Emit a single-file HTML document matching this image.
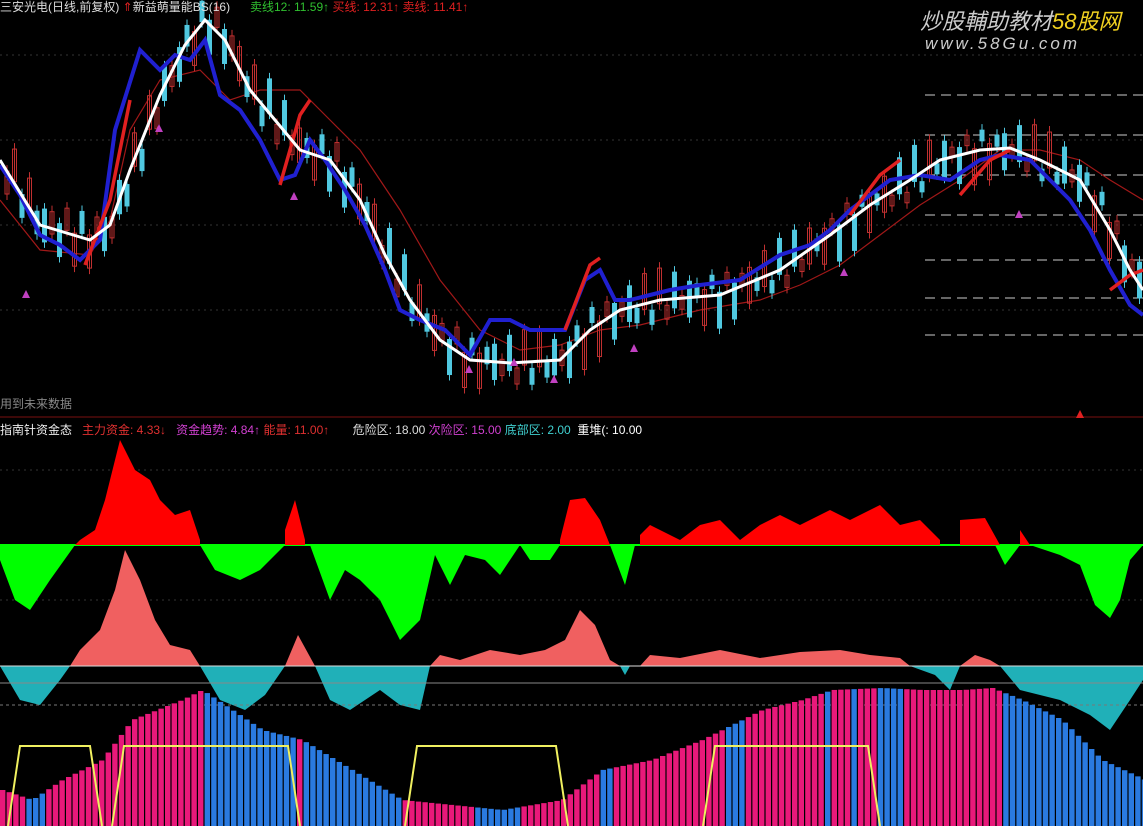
<!DOCTYPE html><html><head><meta charset="utf-8"><style>
body{margin:0;background:#000;width:1143px;height:826px;overflow:hidden;font-family:"Liberation Sans","Noto Sans CJK SC",sans-serif}
svg{position:absolute;left:0;top:0}
.t{position:absolute;font-size:12px;white-space:nowrap}
</style></head><body>
<svg width="1143" height="826" id="s">
<g stroke="#333" stroke-dasharray="2,4" stroke-width="1">
<line x1="0" y1="55" x2="1143" y2="55"/><line x1="0" y1="140" x2="1143" y2="140"/><line x1="0" y1="225" x2="1143" y2="225"/><line x1="0" y1="310" x2="1143" y2="310"/>
<line x1="0" y1="470" x2="1143" y2="470"/><line x1="0" y1="600" x2="1143" y2="600"/>
</g>
<g stroke="#ccc" stroke-dasharray="10,6"><line x1="925" y1="95" x2="1143" y2="95"/><line x1="925" y1="135" x2="1143" y2="135"/><line x1="925" y1="175" x2="1143" y2="175"/><line x1="925" y1="215" x2="1143" y2="215"/><line x1="925" y1="260" x2="1143" y2="260"/><line x1="925" y1="298" x2="1143" y2="298"/><line x1="925" y1="335" x2="1143" y2="335"/></g>
<line x1="0" y1="417" x2="1143" y2="417" stroke="#7a1010"/>
<polyline fill="none" stroke="#a01818" stroke-width="1.2" points="0,200 40,250 90,255 110,220 130,130 160,80 200,70 230,100 260,90 300,90 330,120 360,150 400,210 440,280 480,330 520,350 560,345 600,330 640,325 700,310 760,300 800,285 840,265 880,235 920,205 960,180 1000,150 1040,150 1080,160 1110,180 1143,200"/>
<g id="candles"></g>
<polyline fill="none" stroke="#2020d0" stroke-width="4" points="0,165 20,195 40,235 60,245 80,260 100,240 115,130 140,50 160,70 175,55 190,60 205,40 220,95 240,110 260,140 280,180 295,175 310,140 325,160 345,190 365,225 385,270 400,310 420,320 445,330 470,355 490,320 510,320 530,330 545,330 565,330 585,280 600,270 615,300 630,300 650,295 670,290 700,285 740,280 780,255 810,245 830,230 850,210 870,195 890,180 920,175 950,180 980,160 1000,155 1030,160 1050,180 1070,200 1090,230 1110,270 1130,305 1143,315"/>
<g stroke="#e02020" stroke-width="3.5" fill="none"><polyline points="85,265 110,200 130,100"/><polyline points="280,185 300,115 310,100"/><polyline points="565,330 590,265 600,258"/><polyline points="850,215 880,175 900,160"/><polyline points="960,195 990,160 1010,150"/><polyline points="1110,290 1130,275 1143,270"/></g>
<polyline fill="none" stroke="#fff" stroke-width="3" points="0,160 40,225 90,240 110,225 130,170 160,95 185,45 205,20 225,40 250,90 275,120 300,150 330,160 360,200 385,255 410,300 440,340 470,360 510,363 560,360 590,330 620,310 660,300 720,295 780,270 830,235 870,205 910,180 940,160 980,150 1010,148 1040,160 1080,180 1110,230 1130,270 1143,290"/>
<g fill="#c040c0"><polygon points="22,298 26,290 30,298"/><polygon points="155,132 159,124 163,132"/><polygon points="290,200 294,192 298,200"/><polygon points="465,373 469,365 473,373"/><polygon points="510,366 514,358 518,366"/><polygon points="550,383 554,375 558,383"/><polygon points="630,352 634,344 638,352"/><polygon points="840,276 844,268 848,276"/><polygon points="1015,218 1019,210 1023,218"/><polygon points="1076,418 1080,410 1084,418" fill="#e02020"/></g>
<line x1="0" y1="545" x2="1143" y2="545" stroke="#00ff00" stroke-width="2"/>
<polygon fill="#ff0000" points="75,545 80,540 95,530 105,500 120,440 135,470 150,480 160,500 175,515 190,510 200,540 200,545 285,545 285,530 295,500 305,540 305,545 560,545 560,540 570,500 585,498 600,520 610,545 640,545 640,535 650,525 680,540 700,525 720,520 740,540 760,525 780,515 800,525 830,510 850,520 880,505 900,525 920,520 940,540 940,545 960,545 960,520 985,518 1000,545 1020,545 1020,530 1030,545"/>
<polygon fill="#00ff00" points="0,545 0,560 15,600 30,610 50,580 75,545 200,545 215,570 240,580 260,570 285,545 310,545 330,600 345,570 360,580 380,600 400,640 420,620 435,555 450,585 465,555 485,560 500,575 520,545 530,560 550,560 560,545 610,545 625,585 635,545 995,545 1005,565 1020,545 1030,545 1060,555 1080,565 1095,605 1110,618 1120,600 1130,560 1143,545"/>
<polygon fill="#f06060" points="70,666 80,650 100,630 115,590 125,550 140,580 155,620 170,645 190,650 200,666 285,666 298,635 315,666 430,666 440,655 460,660 490,650 520,655 545,650 565,640 580,610 595,625 610,660 620,666 640,666 650,655 680,658 720,650 760,658 800,652 840,650 870,655 900,658 910,666 960,666 975,655 990,660 1000,666"/>
<polygon fill="#20b0b8" points="0,666 20,700 40,705 60,680 70,666 200,666 220,700 245,710 265,695 285,666 315,666 330,700 350,710 380,690 400,705 420,710 430,666 620,666 625,675 630,666 910,666 935,675 950,690 960,666 1000,666 1020,690 1060,700 1090,715 1110,730 1130,700 1143,680 1143,666"/>
<line x1="0" y1="666" x2="1143" y2="666" stroke="#ddd" stroke-width="1"/>
<line x1="0" y1="683" x2="1143" y2="683" stroke="#888" stroke-width="1"/>
<line x1="0" y1="705" x2="1143" y2="705" stroke="#777" stroke-dasharray="3,3"/>
<g id="bars"></g>
<g stroke="#f0f060" stroke-width="2" fill="none">
<polyline points="8,826 20,746 90,746 102,826"/><polyline points="112,826 124,746 288,746 300,826"/><polyline points="405,826 417,746 556,746 568,826"/><polyline points="703,826 715,746 868,746 880,826"/></g>
</svg>
<div class="t" style="left:0;top:-2px;color:#ddd">三安光电(日线,前复权) <span style="color:#e02020">⇑</span>新益萌量能BS(16)</div>
<div class="t" style="left:250px;top:-2px;color:#30c030">卖线12: 11.59↑ <span style="color:#e02020">买线: 12.31↑ 卖线: 11.41↑</span></div>
<div class="t" style="left:920px;top:4px;color:#ccc;font-size:22px;font-style:italic">炒股輔助教材<span style="color:#f0d020">58股网</span></div>
<div class="t" style="left:925px;top:34px;color:#ccc;font-size:17px;font-style:italic;letter-spacing:3px">www.58Gu.com</div>
<div class="t" style="left:0;top:395px;color:#888">用到未来数据</div>
<div class="t" style="left:0;top:421px;color:#eee">指南针资金态 &nbsp; <span style="color:#e03030">主力资金: 4.33↓</span> &nbsp; <span style="color:#d040d0">资金趋势: 4.84↑</span> <span style="color:#e03030">能量: 11.00↑</span> &nbsp; &nbsp; &nbsp; <span style="color:#ddd">危险区: 18.00</span> <span style="color:#d040d0">次险区: 15.00</span> <span style="color:#40d0d0">底部区: 2.00</span> &nbsp;<span style="color:#fff">重堆(: 10.00</span></div>
<script>
var ns="http://www.w3.org/2000/svg";
function lerp(p,x){for(var i=0;i<p.length-1;i++){if(x>=p[i][0]&&x<=p[i+1][0]){var t=(x-p[i][0])/(p[i+1][0]-p[i][0]);return p[i][1]+t*(p[i+1][1]-p[i][1]);}}return p[p.length-1][1];}
var prof=[[0,790],[30,800],[60,780],[100,760],[130,720],[180,700],[200,690],[230,710],[260,730],[300,740],[350,770],[400,800],[450,805],[500,810],[560,800],[600,770],[650,760],[700,740],[760,710],[800,700],[830,690],[880,688],[920,690],[960,690],[990,688],[1020,700],[1060,720],[1100,760],[1143,780]];
var blue=[[200,295],[300,400],[470,520],[725,740],[820,830],[850,858],[875,900],[1000,1143],[20,45],[600,610]];
var g=document.getElementById("bars");
for(var x=0;x<1143;x+=6.6){var y=lerp(prof,x);var b=false;for(var k=0;k<blue.length;k++)if(x>=blue[k][0]&&x<blue[k][1])b=true;
var r=document.createElementNS(ns,"rect");r.setAttribute("x",x);r.setAttribute("y",y);r.setAttribute("width",5.4);r.setAttribute("height",826-y);r.setAttribute("fill",b?"#2a7ae0":"#e8197a");g.appendChild(r);}
var wp=[[0,160],[40,225],[90,240],[110,225],[130,170],[160,95],[185,45],[205,20],[225,40],[250,90],[275,120],[300,150],[330,160],[360,200],[385,255],[410,300],[440,340],[470,360],[510,363],[560,360],[590,330],[620,310],[660,300],[720,295],[780,270],[830,235],[870,205],[910,180],[940,160],[980,150],[1010,148],[1040,160],[1080,180],[1110,230],[1130,270],[1143,290]];
var c=document.getElementById("candles");
for(var x=5;x<1143;x+=7.5){var m=lerp(wp,x)+Math.sin(x*0.37)*15;var h=5+Math.abs(Math.cos(x*0.21))*13;var up=Math.sin(x*0.53)>0;
var l=document.createElementNS(ns,"line");l.setAttribute("x1",x+2);l.setAttribute("x2",x+2);l.setAttribute("y1",m-h-6);l.setAttribute("y2",m+h+6);l.setAttribute("stroke",up?"#c03030":"#50c8e0");c.appendChild(l);
var r=document.createElementNS(ns,"rect");r.setAttribute("x",x);r.setAttribute("y",m-h);r.setAttribute("width",4);r.setAttribute("height",2*h);r.setAttribute("fill",up?"none":"#50c8e0");r.setAttribute("stroke",up?"#c03030":"#50c8e0");c.appendChild(r);}
</script>
</body></html>
